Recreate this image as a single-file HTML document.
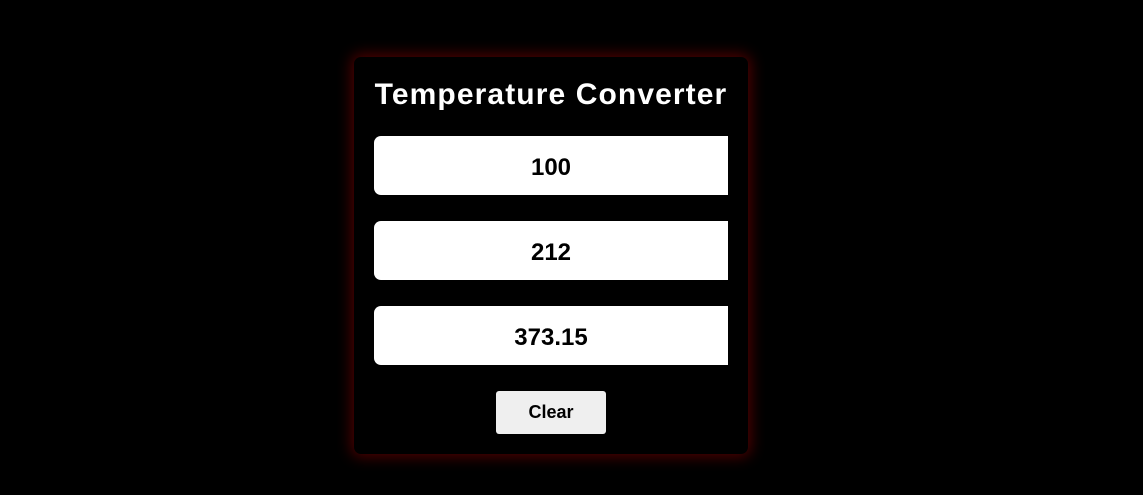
<!DOCTYPE html>
<html><head><style>
html,body{margin:0;background:#000;width:1143px;height:495px;overflow:hidden;font-family:"Liberation Sans",Arial,sans-serif;}
.card{position:absolute;left:354px;top:57px;width:394px;height:397px;background:#000;border-radius:7px;box-shadow:0 0 14px 3px rgba(110,0,0,.7);}
h1{position:absolute;left:0;top:20px;width:394px;margin:0;text-align:center;color:#fff;font-size:30px;font-weight:bold;letter-spacing:1.1px;line-height:36px;}
.in{position:absolute;left:20px;width:354px;height:59px;background:#fff;border-radius:7px 0 0 7px;text-align:center;line-height:63px;font-size:24px;font-weight:bold;color:#000}
.btn{position:absolute;left:142px;top:334px;width:110px;height:43px;background:#efefef;border-radius:3px;text-align:center;line-height:43px;font-size:18px;font-weight:bold;color:#000}
</style></head><body>
<div class="card">
<h1>Temperature Converter</h1>
<div class="in" style="top:79px">100</div>
<div class="in" style="top:164px">212</div>
<div class="in" style="top:249px">373.15</div>
<div class="btn">Clear</div>
</div>
</body></html>
